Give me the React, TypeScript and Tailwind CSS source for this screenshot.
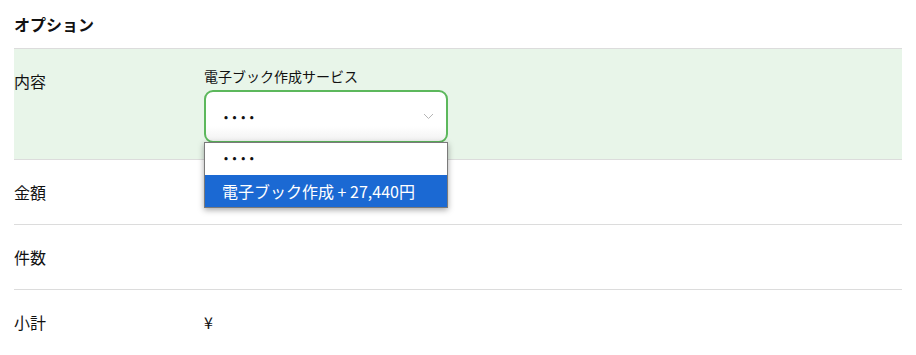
import React from "react";

const font = { fontFamily: '"Noto Sans CJK JP", "Noto Sans", sans-serif' };

function Row({ label, children, className = "" }: { label: string; children?: React.ReactNode; className?: string }) {
  return (
    <div className={`flex border-b border-[#dcdcdc] ${className}`}>
      <div className="w-[190px] shrink-0 text-[16px] leading-[22px] text-[#111]">{label}</div>
      <div className="flex-1 text-[16px] leading-[22px] text-[#111]">{children}</div>
    </div>
  );
}

export default function App() {
  return (
    <div className="min-h-[355px] w-[916px] bg-white px-[14px] pt-[12px]" style={font}>
      <h2 className="text-[16px] font-bold leading-[24px] text-[#111]">オプション</h2>
      <div className="mt-[12px] border-t border-[#dcdcdc]">
        <div className="flex border-b border-[#dcdcdc] bg-[#e8f5e9] pb-[16px] pt-[21px]">
          <div className="w-[190px] shrink-0 text-[16px] leading-[22px] text-[#111]">内容</div>
          <div className="flex-1">
            <div className="-mt-[3px] text-[14px] leading-[18px] text-[#111]">電子ブック作成サービス</div>
            <div className="relative mt-[5px] w-[244px]">
              <div className="flex h-[53px] items-center justify-between rounded-[9px] border-2 border-[#5cb85c] bg-gradient-to-b from-white from-70% to-[#f2f2f2] pl-[15px] pr-[12px]">
                <span className="text-[17px] font-bold tracking-[-1.5px] text-[#111]">····</span>
                <svg width="11" height="7" viewBox="0 0 11 7" fill="none">
                  <path d="M1 1l4.5 4.5L10 1" stroke="#b5b5b5" strokeWidth="1" />
                </svg>
              </div>
              <div className="absolute left-0 top-[52px] z-10 w-[244px] border border-[#7a7a7a] bg-white shadow-[0_2px_6px_rgba(0,0,0,0.35)]">
                <div className="h-[32px] pl-[16px] text-[17px] font-bold leading-[30px] tracking-[-1.5px] text-[#111]">····</div>
                <div className="h-[32px] bg-[#1b69d3] pl-[17px] text-[16px] leading-[32px] text-white">電子ブック作成 + 27,440円</div>
              </div>
            </div>
          </div>
        </div>
        <Row label="金額" className="py-[21px]" />
        <Row label="件数" className="py-[21px]" />
        <div className="flex py-[21px]">
          <div className="w-[190px] shrink-0 text-[16px] leading-[22px] text-[#111]">小計</div>
          <div className="flex-1 text-[16px] leading-[22px] text-[#111]">¥</div>
        </div>
      </div>
    </div>
  );
}
